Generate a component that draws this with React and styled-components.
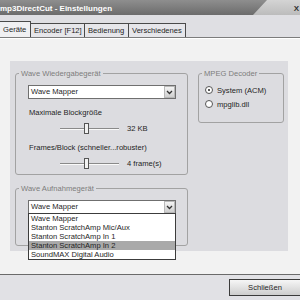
import React from 'react'
import styled, { createGlobalStyle } from 'styled-components'

const GlobalStyle = createGlobalStyle`
  html, body {
    margin: 0;
    padding: 0;
  }
  body {
    width: 300px;
    height: 300px;
    overflow: hidden;
    font-family: "Liberation Sans", Arial, sans-serif;
    font-size: 7.6px;
    color: #1e1e1e;
  }
  * { box-sizing: border-box; }
`

const Window = styled.div`
  width: 300px;
  height: 300px;
  display: flex;
  flex-direction: column;
  background: #f2f2f2;
  overflow: hidden;
`

const TitleBar = styled.div`
  height: 15px;
  flex-shrink: 0;
  display: flex;
  background: linear-gradient(#8e8e8e, #6c6c6c);
`

const Title = styled.div`
  flex: 1;
  color: #fff;
  font-weight: bold;
  font-size: 8px;
  line-height: 14px;
  padding-top: 2px;
  white-space: nowrap;
  overflow: hidden;
`

const TitleEnd = styled.div`
  width: 47px;
  display: flex;
  justify-content: flex-end;
  align-items: center;
  padding-top: 1px;
  background: linear-gradient(#d4d4d4, #bcbcbc);
  clip-path: polygon(14px 0, 100% 0, 100% 100%, 0 100%);
`

const CloseGlyph = styled.span`
  font-weight: bold;
  font-size: 8px;
  color: #333;
  margin-right: 1px;
`

const TabBar = styled.div`
  height: 23px;
  flex-shrink: 0;
  display: flex;
  align-items: flex-end;
  background: #dfdfe3;
  border-bottom: 1px solid #7c7c7c;
  box-shadow: 0 1px #fff;
`

const Tab = styled.div`
  width: ${p => p.w}px;
  height: ${p => (p.active ? 16 : 14)}px;
  border: 1px solid #4a4a4a;
  border-bottom: none;
  border-left: ${p => (p.first ? 'none' : '1px solid #4a4a4a')};
  margin-left: ${p => (p.first ? 0 : -1)}px;
  background: ${p => (p.active ? '#f0f0f2' : '#e6e6ea')};
  display: flex;
  align-items: center;
  padding-left: ${p => p.pl}px;
  white-space: nowrap;
  overflow: hidden;
`

const Content = styled.div`
  flex: 1;
  padding: 23px 0 0 10px;
`

const Panel = styled.div`
  width: 278px;
  height: 190px;
  background: #dcdce0;
  padding: 12px 0 0 5px;
  display: flex;
  gap: 10px;
  align-items: flex-start;
`

const Column = styled.div`
  display: flex;
  flex-direction: column;
  gap: 13px;
`

const GroupBox = styled.div`
  position: relative;
  width: ${p => p.w}px;
  height: ${p => p.h}px;
  border: 1px solid #a2a2a2;
  border-radius: 3px;
  padding: 11px 0 0 ${p => p.pl}px;
`

const GroupTitle = styled.span`
  position: absolute;
  top: -5px;
  left: 3px;
  padding: 0 2px;
  line-height: 9px;
  background: #dcdce0;
  color: #7c7c7c;
  white-space: nowrap;
`

const Select = styled.div`
  position: relative;
  width: 148px;
  height: 14px;
  border: 1px solid #6f6f6f;
  background: #fff;
  display: flex;
`

const SelectText = styled.div`
  flex: 1;
  padding-left: 2px;
  line-height: 12px;
  white-space: nowrap;
`

const SelectButton = styled.div`
  width: 11px;
  height: 12px;
  background: linear-gradient(#f4f4f4, #cfcfcf);
  border: 1px solid #b8b8b8;
  display: flex;
  align-items: center;
  justify-content: center;
`

const FieldLabel = styled.div`
  margin-top: ${p => p.mt}px;
  padding-left: 1px;
  line-height: 10px;
  white-space: nowrap;
`

const SliderRow = styled.div`
  display: flex;
  align-items: center;
  height: 11px;
  margin-top: 5px;
`

const Track = styled.div`
  position: relative;
  width: 59px;
  height: 11px;
  margin-left: 32px;
  display: flex;
  align-items: center;
`

const Groove = styled.div`
  width: 100%;
  height: 2px;
  border-top: 1px solid #8a8a8a;
  border-bottom: 1px solid #fafafa;
`

const Thumb = styled.div`
  position: absolute;
  top: 0;
  left: 24px;
  width: 5px;
  height: 11px;
  border: 1px solid #555;
  background: #f2f2f2;
`

const SliderValue = styled.span`
  margin-left: 8px;
  white-space: nowrap;
`

const RadioRow = styled.div`
  display: flex;
  align-items: center;
  gap: 4px;
  height: 10px;
  margin-top: ${p => p.mt}px;
  white-space: nowrap;
`

const RadioCircle = styled.span`
  width: 8px;
  height: 8px;
  border: 1px solid #555;
  border-radius: 50%;
  background: #fff;
  display: flex;
  align-items: center;
  justify-content: center;
  &::after {
    content: '';
    width: 2px;
    height: 2px;
    border-radius: 50%;
    background: ${p => (p.checked ? '#222' : 'transparent')};
  }
`

const DropList = styled.div`
  position: absolute;
  top: 100%;
  left: -1px;
  width: 148px;
  border: 1px solid #3c3c3c;
  background: #fff;
  z-index: 2;
`

const ListItem = styled.div`
  height: 9px;
  line-height: 9px;
  padding-left: 2px;
  white-space: nowrap;
  background: ${p => (p.selected ? '#a9a9a9' : 'transparent')};
`

const Footer = styled.div`
  height: 26px;
  flex-shrink: 0;
  border-top: 1px solid #6a6a6a;
  background: #e1e1e5;
  display: flex;
  justify-content: flex-end;
  padding-top: 4px;
`

const Button = styled.div`
  width: 72px;
  height: 17px;
  margin-right: -1px;
  border: 1px solid #3a3a3a;
  background: linear-gradient(#f6f6f6, #cdcdcd);
  display: flex;
  align-items: center;
  justify-content: center;
`

const Chevron = () => (
  <svg width="7" height="5" viewBox="0 0 7 5">
    <polyline points="1,1 3.5,3.5 6,1" fill="none" stroke="#333" strokeWidth="1.3" />
  </svg>
)

const Dropdown = ({ value, children }) => (
  <Select>
    <SelectText>{value}</SelectText>
    <SelectButton><Chevron /></SelectButton>
    {children}
  </Select>
)

const Slider = ({ value }) => (
  <SliderRow>
    <Track>
      <Groove />
      <Thumb />
    </Track>
    <SliderValue>{value}</SliderValue>
  </SliderRow>
)

const tabs = [
  { label: 'Geräte', w: 31, pl: 3, active: true },
  { label: 'Encoder [F12]', w: 55, pl: 3 },
  { label: 'Bedienung', w: 45, pl: 3 },
  { label: 'Verschiedenes', w: 58, pl: 3 },
]

const devices = [
  'Wave Mapper',
  'Stanton ScratchAmp Mic/Aux',
  'Stanton ScratchAmp In 1',
  'Stanton ScratchAmp In 2',
  'SoundMAX Digital Audio',
]

export default function App() {
  return (
    <Window>
      <GlobalStyle />
      <TitleBar>
        <Title>mp3DirectCut - Einstellungen</Title>
        <TitleEnd><CloseGlyph>X</CloseGlyph></TitleEnd>
      </TitleBar>
      <TabBar>
        {tabs.map((t, i) => (
          <Tab key={t.label} w={t.w} pl={t.pl} active={t.active} first={i === 0}>
            {t.label}
          </Tab>
        ))}
      </TabBar>
      <Content>
        <Panel>
          <Column>
            <GroupBox w={173} h={102} pl={12}>
              <GroupTitle>Wave Wiedergabegerät</GroupTitle>
              <Dropdown value="Wave Mapper" />
              <FieldLabel mt={9}>Maximale Blockgröße</FieldLabel>
              <Slider value="32 KB" />
              <FieldLabel mt={9}>Frames/Block (schneller...robuster)</FieldLabel>
              <Slider value="4 frame(s)" />
            </GroupBox>
            <GroupBox w={173} h={58} pl={12}>
              <GroupTitle>Wave Aufnahmegerät</GroupTitle>
              <Dropdown value="Wave Mapper">
                <DropList>
                  {devices.map((d, i) => (
                    <ListItem key={d} selected={i === 3}>{d}</ListItem>
                  ))}
                </DropList>
              </Dropdown>
            </GroupBox>
          </Column>
          <GroupBox w={86} h={50} pl={6}>
            <GroupTitle>MPEG Decoder</GroupTitle>
            <RadioRow mt={0}><RadioCircle checked />System (ACM)</RadioRow>
            <RadioRow mt={4}><RadioCircle />mpglib.dll</RadioRow>
          </GroupBox>
        </Panel>
      </Content>
      <Footer>
        <Button>Schließen</Button>
      </Footer>
    </Window>
  )
}
